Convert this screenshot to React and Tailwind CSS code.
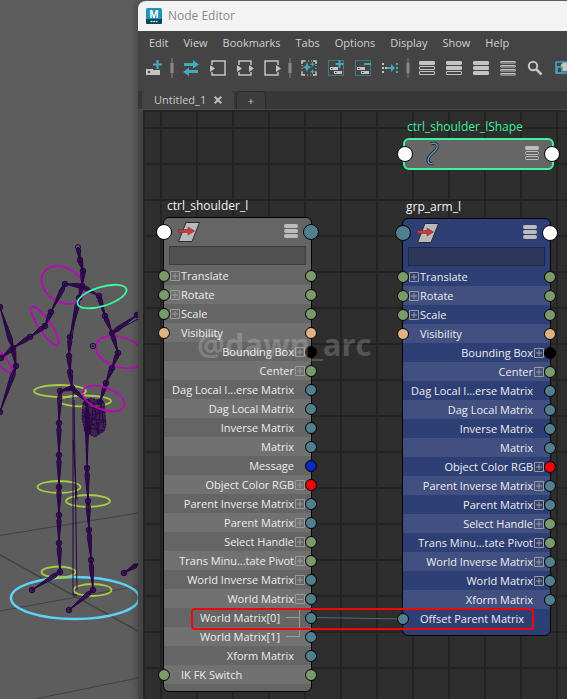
import React from "react";

const GREEN = "bg-[#7b9a69]";
const TEAL = "bg-[#517f8e]";
const PEACH = "bg-[#dfb286]";
const BLACK = "bg-black";
const BLUE = "bg-[#0a27c4]";
const RED = "bg-[#f20505]";

const input = (name, color) => ({ name, side: "left", color, expand: true });
const output = (name, color, expand) => ({ name, side: "right", color, expand });

const common = [
  input("Translate", GREEN),
  input("Rotate", GREEN),
  input("Scale", GREEN),
  { name: "Visibility", side: "left", color: PEACH },
  output("Bounding Box", BLACK, true),
  output("Center", GREEN, true),
  output("Dag Local I...erse Matrix", TEAL),
  output("Dag Local Matrix", TEAL),
  output("Inverse Matrix", TEAL),
  output("Matrix", TEAL),
];

const tail = [
  output("Object Color RGB", RED, true),
  output("Parent Inverse Matrix", TEAL, true),
  output("Parent Matrix", TEAL, true),
  output("Select Handle", GREEN, true),
  output("Trans Minu...tate Pivot", GREEN, true),
  output("World Inverse Matrix", TEAL, true),
];

const shoulderRows = [
  ...common,
  output("Message", BLUE),
  ...tail,
  { name: "World Matrix", side: "right", color: TEAL, collapse: true },
  { name: "World Matrix[0]", side: "right", color: TEAL, child: true },
  { name: "World Matrix[1]", side: "right", color: TEAL, child: true, last: true },
  output("Xform Matrix", TEAL),
  { name: "IK FK Switch", side: "left", color: GREEN },
];

const armRows = [
  ...common,
  ...tail,
  output("World Matrix", TEAL, true),
  output("Xform Matrix", TEAL),
  { name: "Offset Parent Matrix", side: "left", color: TEAL, inputOnly: true },
];

function Port({ color, large }) {
  return (
    <span
      className={
        (large ? "h-4 w-4 " : "h-3 w-3 ") + "block shrink-0 rounded-full border border-black " + color
      }
    />
  );
}

function Expander({ minus }) {
  return (
    <button
      type="button"
      aria-label={minus ? "Collapse" : "Expand"}
      className="block h-[10px] w-[10px] shrink-0 text-[#9a9a9a]"
    >
      <svg viewBox="0 0 10 10" className="h-[10px] w-[10px]" fill="none" stroke="currentColor">
        <path d={minus ? "M.5 .5h9v9h-9zM2 5.5h6" : "M.5 .5h9v9h-9zM2 5h6M5 2v6"} />
      </svg>
    </button>
  );
}

function Row({ row, shade }) {
  const left = row.side === "left";
  return (
    <li className={"flex h-[19px] items-center " + shade}>
      {left && (
        <>
          <span className="-ml-[6px] flex w-3 shrink-0">
            <Port color={row.color} />
          </span>
          <span className="flex w-[11px] shrink-0">{row.expand && <Expander />}</span>
        </>
      )}
      <span className={"flex-1 whitespace-nowrap " + (left ? "text-left" : "flex justify-end")}>
        {row.name}
      </span>
      {!left && (
        <span className={"flex shrink-0 pl-px " + (row.child ? "w-[25px]" : "w-[11px]")}>
          {row.expand && <Expander />}
          {row.collapse && <Expander minus />}
          {row.child && (
            <svg viewBox="0 0 20 19" className="ml-[5px] h-[19px] w-5 shrink-0" fill="none" stroke="#9a9a9a">
              <path d={row.last ? "M0 9.5h13.5V0" : "M0 9.5h13.5M13.5 -5V19"} />
            </svg>
          )}
        </span>
      )}
      <span className="-mr-[6px] flex w-3 shrink-0">{!row.inputOnly && <Port color={row.color} />}</span>
    </li>
  );
}

function ViewModeIcon({ filled }) {
  return (
    <svg viewBox="0 0 14 14" className="mb-[2px] h-[14px] w-[14px]" fill="none" stroke="#bcbcbc">
      {[0, 1, 2].map((i) => (
        <rect key={i} x=".5" y={0.5 + i * 5} width="13" height="3" rx="1" fill={i < filled ? "#bcbcbc" : "none"} />
      ))}
    </svg>
  );
}

function TransformIcon() {
  return (
    <svg viewBox="0 0 22 20" className="h-5 w-[22px]">
      <path d="M8 .5h13.500L14 19.500H.5z" fill="#b9b9b9" stroke="#2b2b2b" />
      <path d="M.5 7.500h9.500V5l6.500 4-6.500 4v-2.500H.5z" fill="#c53c40" stroke="#7d2427" strokeWidth=".5" />
    </svg>
  );
}

function Node({ title, rows, theme, leftPort, rightPort, place }) {
  return (
    <section className={"absolute w-[149px] " + place}>
      <h2 className="h-[21px] pl-1 text-[12px] leading-5 text-[#f2f2f2]">{title}</h2>
      <div className={"rounded-md border border-black pb-[7px] " + theme.base}>
        <header className="flex h-7 items-center">
          <span className="-ml-2 shrink-0">
            <Port large color={leftPort} />
          </span>
          <span className="ml-[6px] flex-1">
            <TransformIcon />
          </span>
          <ViewModeIcon filled={3} />
          <span className="-mr-2 ml-[5px] shrink-0">
            <Port large color={rightPort} />
          </span>
        </header>
        <input
          aria-label={title + " filter"}
          className={"mx-[5px] mb-px block h-[19px] w-[137px] border px-1 outline-none " + theme.field}
        />
        <ul className="text-[11px] leading-[19px] text-[#ececec]">
          {rows.map((row, i) => (
            <Row key={row.name} row={row} shade={i % 2 ? theme.odd : theme.base} />
          ))}
        </ul>
      </div>
    </section>
  );
}

const gray = {
  base: "bg-[#656565]",
  odd: "bg-[#717171]",
  field: "border-[#3c3c3c] bg-[#505050]",
};
const navy = {
  base: "bg-[#2e3f75]",
  odd: "bg-[#414f81]",
  field: "border-[#1e2947] bg-[#2e385a]",
};

const G = "#c4c4c4";
const C = "#43a9bd";

function Bars({ styles }) {
  const four = styles.length === 4;
  return styles.map((solid, i) => (
    <rect
      key={i}
      x="1.500"
      y={2.5 + i * (four ? 4 : 5)}
      width="15"
      height={four ? 1.5 : 3}
      rx=".5"
      fill={solid ? G : "none"}
      stroke={G}
    />
  ));
}

const tools = [
  ["Create node", <>
    <path d="M1 10h14v6H1z" fill={G} /><path d="M8 8h7v3H8z" fill="#444" /><circle cx="4" cy="13" r="1.200" fill="#444" />
    <path d="M12.500 1v9M8 5.500h9" stroke={C} strokeWidth="2.200" />
  </>],
  null,
  ["Synchronize", <>
    <path d="M2 4h9V1l6 4.500-6 4V7H2zM16 11H7V8.500l-6 4.500 6 4v-3h9z" fill={C} />
  </>],
  ["Input connections", <>
    <path d="M3 6V2h13v14H3v-3" fill="none" stroke={G} strokeWidth="1.500" /><path d="M1 6l5 3.500L1 13z" fill={G} />
  </>],
  ["Input and output connections", <>
    <path d="M3 6V2h12v4M3 13v3h12v-3" fill="none" stroke={G} strokeWidth="1.500" /><path d="M1 6l5 3.500L1 13zM13 6l5 3.500-5 3.500z" fill={G} />
  </>],
  ["Output connections", <>
    <path d="M15 6V2H2v14h13v-3" fill="none" stroke={G} strokeWidth="1.500" /><path d="M13 6l5 3.500-5 3.500z" fill={G} />
  </>],
  null,
  ["Clear graph", <>
    <path d="M2 5V2h3M13 2h3v3M16 13v3h-3M5 16H2v-3" fill="none" stroke={G} strokeWidth="1.500" />
    <path d="M2 2h14v14H2z" fill="none" stroke={G} strokeDasharray="1 2" />
    <path d="M7 3l1.500 4L12 8l-3.500 1.500L7 13 5.500 9.500 2.500 8l3-1zM12.500 2.500l.8 2 2 .8-2 .8-.8 2-.8-2-2-.8 2-.8zM12.500 10l.8 2 2 .8-2 .8-.8 2-.8-2-2-.8 2-.8z" fill={C} />
  </>],
  ["Add selected", <>
    <path d="M1.500 1.500h15v15h-15z" fill="none" stroke={C} strokeDasharray="1 1" />
    <path d="M3 8h8v3H3zM7 12h8v3H7z" fill={G} /><path d="M12.500 1v8M8.500 5h8" stroke={C} strokeWidth="2" />
    <path d="M4 9.500h1.500M8 13.500h1.500" stroke="#333" />
  </>],
  ["Remove selected", <>
    <path d="M1.500 1.500h15v15h-15z" fill="none" stroke={C} strokeDasharray="1 1" />
    <path d="M3 8h8v3H3zM7 12h8v3H7z" fill={G} /><path d="M10 5h7" stroke={C} strokeWidth="2" />
    <path d="M4 9.500h1.500M8 13.500h1.500" stroke="#333" />
  </>],
  ["Rearrange graph", <>
    <path d="M1 4h2v2H1zM1 8h2v2H1zM1 12h2v2H1zM4 8h2v2H4z" fill={G} />
    <path d="M6 8h4V5l4 4-4 4v-3H6zM15 4h2v2h-2zM15 8h2v2h-2zM15 12h2v2h-2z" fill={C} />
  </>],
  null,
  ["Simple mode", <Bars styles={[true, false, false]} />],
  ["Connected mode", <Bars styles={[true, true, false]} />],
  ["Full mode", <Bars styles={[true, true, true]} />],
  ["Custom mode", <Bars styles={[false, false, false, false]} />],
  ["Search", <>
    <circle cx="7" cy="7" r="4.200" fill="none" stroke={G} strokeWidth="2" /><path d="M10 10l5.500 5.500" stroke={G} strokeWidth="2.500" />
  </>],
  ["Isolate", <>
    <path d="M3 3h16v11H3z" fill="none" stroke={C} strokeWidth="1.500" /><circle cx="12" cy="8" r="4.500" fill={G} />
    <path d="M4 8h5v6H4z" fill="#444" stroke={C} strokeWidth="1.500" />
  </>],
];

const bones = [
  [78, 247, 80, 260], [80, 260, 83, 271], [83, 271, 82, 286], [82, 286, 79, 298], [79, 298, 70, 337],
  [70, 337, 69, 356], [69, 356, 70, 372], [70, 372, 72, 388], [82, 286, 65, 284], [65, 284, 51, 312],
  [51, 312, 45, 326], [45, 326, 30, 337], [30, 337, 13, 348], [13, 348, 0, 307], [13, 348, 1, 358],
  [13, 348, 16, 366], [16, 366, 0, 412], [82, 286, 99, 296], [99, 296, 105, 316], [105, 316, 112, 333],
  [112, 333, 137, 315], [112, 333, 118, 353], [118, 353, 112, 368], [112, 368, 106, 383], [106, 383, 100, 402],
  [72, 388, 60, 391], [72, 388, 87, 402], [60, 391, 59, 423], [59, 423, 59, 455], [59, 455, 59, 487],
  [59, 487, 59, 515], [59, 515, 59, 543], [59, 543, 60, 572], [60, 572, 32, 590], [87, 402, 87, 468],
  [87, 468, 88, 501], [88, 501, 89, 530], [89, 530, 91, 560], [91, 560, 93, 590], [93, 590, 69, 610],
  [138, 564, 124, 573],
];

function Bone({ b: [x1, y1, x2, y2] }) {
  const len = Math.hypot(x2 - x1, y2 - y1);
  const nx = (-(y2 - y1) / len) * 2.2;
  const ny = ((x2 - x1) / len) * 2.2;
  const mx = x1 + (x2 - x1) * 0.2;
  const my = y1 + (y2 - y1) * 0.2;
  return (
    <>
      <path
        d={`M${x1} ${y1}L${mx + nx} ${my + ny}L${x2} ${y2}L${mx - nx} ${my - ny}ZM${x1} ${y1}L${x2} ${y2}`}
        fill="#290546"
        fillOpacity=".8"
      />
      <circle cx={x2} cy={y2} r="2.800" fillOpacity=".75" fill="#290546" />
    </>
  );
}

function Viewport() {
  return (
    <svg
      viewBox="0 0 138 699"
      className="absolute left-0 top-0 h-[699px] w-[138px]"
      fill="none"
      role="img"
      aria-label="Character rig"
    >
      <g stroke="#424242">
        <path d="M0 535.500L138 513M0 611L138 586M37 698.500L138 678" />
        <path d="M0 555L138 631" strokeWidth="1.500" />
      </g>
      <ellipse cx="75" cy="598" rx="64" ry="21" stroke="#5cd3fb" strokeWidth="2.500" />
      <g stroke="#c200c2" strokeWidth="1.700">
        <ellipse cx="63" cy="285" rx="23" ry="17" transform="rotate(32 63 285)" />
        <ellipse cx="45" cy="326" rx="23" ry="6" transform="rotate(56 45 326)" />
        <ellipse cx="120" cy="352" rx="25" ry="15" transform="rotate(18 120 352)" />
        <ellipse cx="0" cy="359" rx="18" ry="5" transform="rotate(48 0 359)" />
      </g>
      <g stroke="#a6cd45" strokeWidth="1.800">
        <ellipse cx="60" cy="391" rx="26" ry="6" />
        <ellipse cx="85" cy="401" rx="26" ry="5.500" />
        <ellipse cx="59" cy="487" rx="21.500" ry="6" />
        <ellipse cx="88" cy="501" rx="22" ry="6" />
        <ellipse cx="58.500" cy="572" rx="17" ry="5.500" />
        <ellipse cx="92.500" cy="590" rx="19" ry="6" />
      </g>
      <g stroke="#290546">
        {bones.map((b, i) => (
          <Bone key={i} b={b} />
        ))}
        <path d="M73 388V595H77M74 400L77 590M73 440L77 500M79 298L72 337M112 333L138 319" />
        <circle cx="78" cy="247" r="2.500" />
        <circle cx="93" cy="346" r="2.800" />
        <circle cx="93" cy="346" r="1" />
        <path d="M83 403L90 398 104 402 106 425 104 431 95 437 85 432 82 418z" fill="#290546" fillOpacity=".65" strokeDasharray="2 1" />
        <path d="M84 405L105 412 83 417 106 421 84 427 104 431M87 400L90 434 94 402 98 434 101 401 104 428M84 430L105 404M83 411L100 433" />
      </g>
      <ellipse cx="103.500" cy="398.500" rx="22" ry="11" transform="rotate(20 103.500 398.500)" stroke="#c200c2" strokeWidth="1.700" />
      <ellipse cx="102" cy="296.500" rx="25.500" ry="9.500" transform="rotate(-17 102 296.500)" stroke="#3cf7a4" strokeWidth="1.800" />
    </svg>
  );
}

const menus = ["Edit", "View", "Bookmarks", "Tabs", "Options", "Display", "Show", "Help"];

export default function App() {
  return (
    <main className="relative flex min-h-screen overflow-hidden bg-[#5d5d5d] pl-[138px] font-['Open_Sans','Noto_Sans',sans-serif]">
      <Viewport />
      <div className="relative flex min-w-0 flex-1 flex-col overflow-hidden rounded-tl-lg border-t border-[#5f5a5f] bg-[#444444] shadow-[0_0_10px_rgba(0,0,0,0.35)]">
        <header className="flex h-[30px] shrink-0 items-center gap-[6px] bg-[#f3f3f3] pl-2">
          <svg viewBox="0 0 16 16" className="h-4 w-4">
            <rect width="16" height="16" rx="1.500" fill="#2492b5" />
            <path d="M0 11h16v3.500a1.500 1.500 0 0 1-1.500 1.500h-13A1.500 1.500 0 0 1 0 14.500z" fill="#0d4358" />
            <text x="8" y="9.500" textAnchor="middle" fontSize="10" fontWeight="700" fill="#fff">M</text>
            <path d="M4.500 13.500h7" stroke="#c5e4ee" strokeWidth="1.500" strokeDasharray="2 .7" />
          </svg>
          <h1 className="text-[12px] text-[#8a8a8a]">Node Editor</h1>
        </header>
        <nav className="flex h-[25px] shrink-0 items-center gap-[15px] pl-[11px] text-[11px] text-[#d0d0d0]">
          {menus.map((menu) => (
            <button key={menu} type="button">
              {menu}
            </button>
          ))}
        </nav>
        <div role="toolbar" aria-label="Node tools" className="flex h-[35px] shrink-0 pl-[2px]">
          {tools.map((tool, i) =>
            tool ? (
              <button key={i} type="button" aria-label={tool[0]} className="flex h-6 w-[27px] shrink-0 items-center justify-center">
                <svg viewBox="0 0 18 18" className="h-[18px] w-[18px]">
                  {tool[1]}
                </svg>
              </button>
            ) : (
              <span key={i} className="flex h-6 w-[10px] shrink-0 items-center justify-center">
                <svg viewBox="0 0 4 20" className="h-5 w-1" fill="#8a8a8a">
                  <path d="M1.500 0h1v20h-1zM.5 5h3v10h-3z" />
                </svg>
              </span>
            )
          )}
        </div>
        <div className="flex h-[18px] shrink-0 bg-[#373737] pl-1 text-[#c8c8c8]">
          <div className="flex w-[92px] items-center gap-2 rounded-t-sm bg-[#444444] pl-3 text-[11px]">
            <button type="button">Untitled_1</button>
            <button type="button" aria-label="Close tab">
              <svg viewBox="0 0 8 8" className="h-2 w-2" stroke="#bdbdbd" strokeWidth="2">
                <path d="M.7 .7l6.600 6.600M7.300 .7L.7 7.300" />
              </svg>
            </button>
          </div>
          <button type="button" aria-label="New tab" className="ml-[2px] flex w-[30px] items-center justify-center rounded-t-sm border border-b-0 border-[#2c2c2c] bg-[#3c3c3c] text-[11px] leading-none">
            +
          </button>
        </div>
        <div className="flex flex-1 border-t border-[#4a4a4a] pl-[5px]">
          <div className="relative min-h-[588px] flex-1 overflow-hidden border-l-2 border-t-2 border-[#242424] bg-[#2e2e2e] bg-[linear-gradient(to_right,#232323_2px,transparent_2px),linear-gradient(to_bottom,#232323_2px,transparent_2px)] bg-[length:36px_36px] bg-[position:15px_15px]">
            <svg viewBox="0 0 100 6" className="absolute left-[166px] top-[503px] h-[6px] w-[100px]" stroke="#46707f">
              <path d="M0 2.500L100 4" />
            </svg>
            <section className="absolute left-[258px] top-[5px] w-[151px]">
              <h2 className="h-[21px] whitespace-nowrap pl-1 text-[12px] leading-5 text-[#3df09b]">ctrl_shoulder_lShape</h2>
              <div className="flex h-8 items-center rounded-md border-2 border-[#3df59c] bg-[#666666]">
                <span className="-ml-2 shrink-0">
                  <Port large color="bg-white" />
                </span>
                <span className="ml-3 flex-1">
                  <svg viewBox="0 0 16 24" className="h-6 w-4" fill="none">
                    <path d="M6 2c4-2 7 0 6 4-2 5-9 7-9 12 0 4 3 4 5 3" stroke="#222" strokeWidth="3" />
                    <path d="M6 2c4-2 7 0 6 4-2 5-9 7-9 12 0 4 3 4 5 3" stroke="#55a5cb" strokeWidth="1.300" />
                  </svg>
                </span>
                <ViewModeIcon filled={1} />
                <span className="-mr-2 ml-[5px] shrink-0">
                  <Port large color="bg-white" />
                </span>
              </div>
            </section>
            <Node title="ctrl_shoulder_l" rows={shoulderRows} theme={gray} leftPort="bg-white" rightPort={TEAL} place="left-[18px] top-[84px]" />
            <Node title="grp_arm_l" rows={armRows} theme={navy} leftPort={TEAL} rightPort="bg-white" place="left-[257px] top-[85px]" />
            <div className="absolute left-[46px] top-[496px] h-[22px] w-[343px] rounded border-2 border-[#f00808]" />
            <p className="pointer-events-none absolute left-[52px] top-[214px] text-[31px] font-bold leading-9 text-white/20">@dawn_arc</p>
          </div>
        </div>
      </div>
    </main>
  );
}
